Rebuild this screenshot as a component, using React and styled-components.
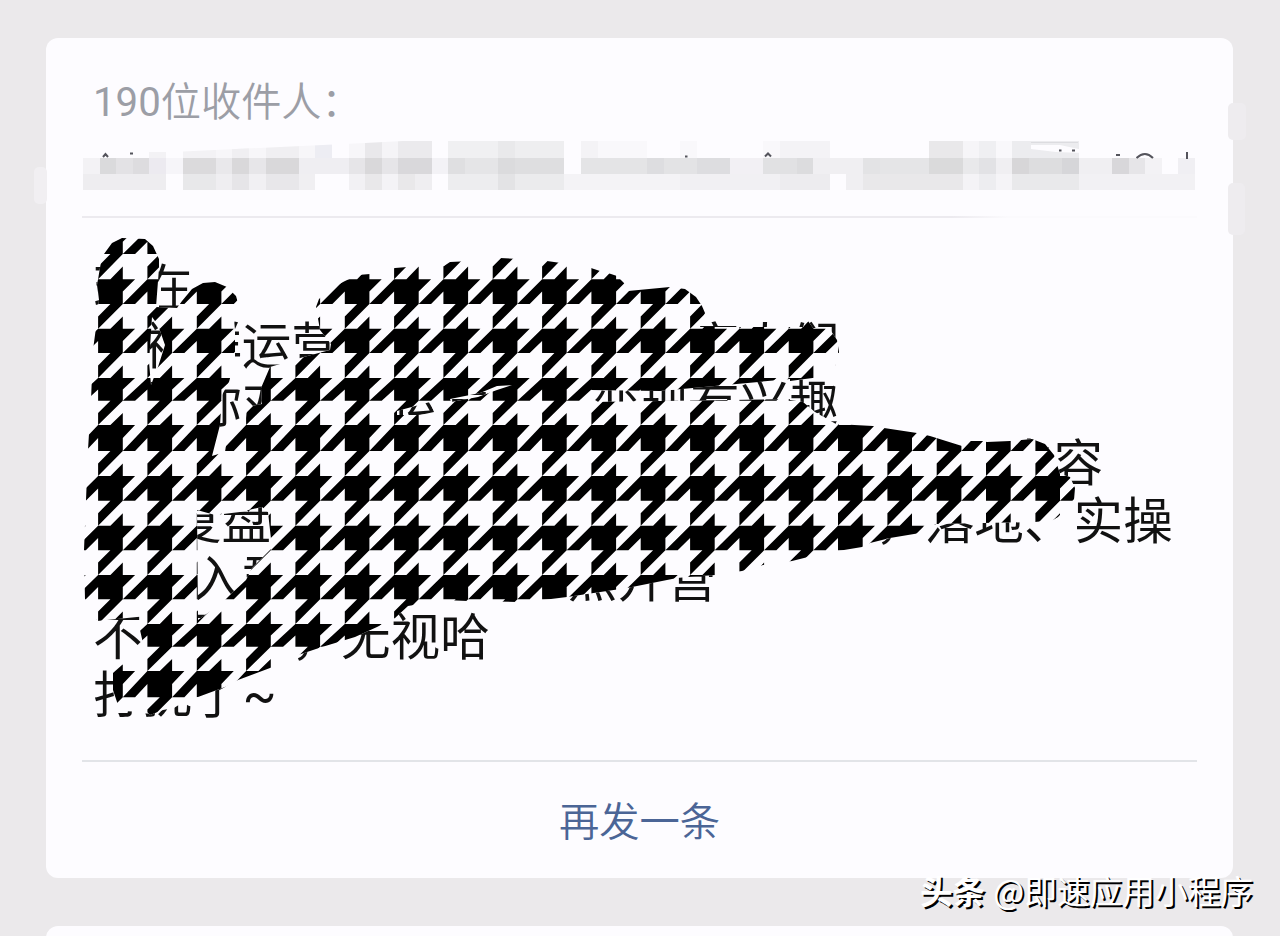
import React from 'react'
import styled, { createGlobalStyle } from 'styled-components'

const PAGE_COLOR = '#ebe9eb'
const CARD_COLOR = '#fdfcff'
const INK_COLOR = '#000'
const FONT = "Roboto, 'Noto Sans CJK SC', sans-serif"

const GlobalStyle = createGlobalStyle`
  body {
    margin: 0;
    background: ${PAGE_COLOR};
    font-family: ${FONT};
  }
`

const Page = styled.div`
  position: relative;
  box-sizing: border-box;
  width: 1280px;
  height: 936px;
  padding: 38px 47px 0 46px;
  overflow: hidden;
  display: flex;
  flex-direction: column;
  gap: 48px;
`

const Card = styled.div`
  position: relative;
  box-sizing: border-box;
  flex: none;
  height: 840px;
  padding: 0 36px;
  border-radius: 12px;
  background: ${CARD_COLOR};
  display: flex;
  flex-direction: column;
`

const Smudge = styled.div`
  position: absolute;
  left: ${p => p.$left}px;
  top: ${p => p.$top}px;
  width: ${p => p.$width}px;
  height: ${p => p.$height}px;
  border-radius: 5px;
  background: ${p => p.$color};
`

const Recipients = styled.div`
  position: relative;
  box-sizing: border-box;
  height: 178px;
  padding-top: 36px;
`

const Count = styled.div`
  height: 58px;
  padding-left: 11px;
  line-height: 58px;
  font-size: 40.2px;
  font-weight: 350;
  color: #9c9ea6;
`

const Digits = styled.span`
  font-weight: 400;
`

const Mosaic = styled.div`
  display: grid;
  width: 1112px;
  margin: 9px 0 0 1px;
  grid-template-columns: repeat(67, 1fr);
  grid-template-rows: 17px 16px 16px;
  clip-path: polygon(0 16px, 66px 11px, 90px 11px, 282px 2px, 320px 0, 100% 0, 100% 100%, 0 100%);
`

const MosaicCell = styled.span`
  grid-row: ${p => p.$row};
  grid-column: ${p => p.$from + 1} / ${p => p.$to + 1};
  background: ${p => p.$color};
`

const Leftovers = styled.svg`
  position: absolute;
  left: 0;
  top: 100px;
  width: 1116px;
  height: 30px;
`

const Divider = styled.div`
  flex: none;
  height: 2px;
  background: ${p => p.$fade
    ? 'linear-gradient(to right, #eceaef 78%, #fbfafd 83%)'
    : '#e2e4e8'};
`

const Message = styled.div`
  position: relative;
  box-sizing: border-box;
  height: 542px;
  padding: 42px 0 0 11px;
`

const Line = styled.div`
  display: flex;
  height: 58.2px;
  line-height: 58.2px;
  font-size: 49.6px;
  white-space: nowrap;
  color: #111;
`

const Part = styled.span`
  margin-left: ${p => p.$gap || 0}px;
`

const Doodle = styled.svg`
  position: absolute;
  left: 0;
  top: 0;
  width: 1116px;
  height: 542px;
`

const SendAgain = styled.button`
  flex: 1;
  padding: 0 0 3px;
  border: 0;
  background: none;
  font-family: 'Noto Sans CJK SC', sans-serif;
  font-size: 40.3px;
  font-weight: 350;
  color: #4b6596;
`

const Watermark = styled.div`
  position: absolute;
  right: 27px;
  bottom: 23px;
  display: flex;
  align-items: center;
  gap: 8px;
  height: 48px;
  font-family: 'Noto Sans CJK SC', sans-serif;
  font-size: 32.7px;
  color: #fff;
  text-shadow: 2px 2px 0 #000;
  white-space: nowrap;
`

const Brand = styled.span`
  font-weight: 700;
`

// [from column, to column, color] for each row of the mosaic
const MOSAIC = [
  [
    [4, 5, '#f3f2f5'], [6, 8, '#f3f2f5'], [8, 11, '#f7f6f9'], [9, 10, '#f0eff2'], [11, 13, '#f0eff2'],
    [13, 14, '#f7f6f9'], [14, 15, '#ededf3'], [16, 17, '#f7f6f9'], [17, 18, '#e9e8eb'], [18, 19, '#f5f4f7'],
    [19, 21, '#ebeaed'], [22, 25, '#f0f0f2'], [25, 26, '#e9e9eb'], [26, 29, '#eeeef0'], [30, 31, '#f4f3f6'],
    [31, 34, '#f9f8fb'], [36, 37, '#f9f8fb'], [41, 42, '#f9f8fb'], [42, 45, '#f4f3f6'], [51, 53, '#e9e8ea'],
    [53, 54, '#f6f5f8'], [54, 55, '#efeff2'], [55, 56, '#f9f8fb'], [56, 60, '#ececef'],
  ],
  [
    [0, 1, '#f3f2f5'], [1, 2, '#dadadc'], [2, 3, '#e3e2e5'], [3, 4, '#dddcdf'], [4, 5, '#eceaf0'],
    [5, 6, '#f6f5f9'], [6, 8, '#dbdadc'], [8, 9, '#e9e8eb'], [9, 10, '#d9d8da'], [10, 11, '#e7e6e9'],
    [11, 13, '#d9d8da'], [13, 16, '#efeef2'], [16, 17, '#e6e5e8'], [17, 18, '#d9d8da'], [18, 19, '#e6e5e8'],
    [19, 21, '#d9d8db'], [21, 22, '#f3f2f6'], [22, 23, '#dfdfe1'], [23, 25, '#e5e5e7'], [25, 26, '#dbdbdd'],
    [26, 29, '#dedee0'], [30, 34, '#e4e4e6'], [34, 35, '#dddde0'], [35, 37, '#e3e3e5'], [37, 39, '#dddde0'],
    [39, 41, '#f2f0f4'], [41, 43, '#e1e1e3'], [43, 44, '#dcdcde'], [44, 47, '#f0eff2'], [47, 48, '#e3e3e5'],
    [48, 51, '#e5e5e7'], [51, 53, '#dadadb'], [53, 54, '#e9e9eb'], [54, 55, '#e2e2e5'], [55, 56, '#f0eff2'],
    [56, 57, '#d7d6d8'], [57, 59, '#dddddf'], [59, 60, '#d6d6d9'], [60, 62, '#f0eff2'], [62, 63, '#d8d7da'],
    [63, 64, '#e6e5e8'], [64, 65, '#f3f2f5'], [66, 67, '#f0eff3'],
  ],
  [
    [0, 5, '#eeedf0'], [6, 8, '#e8e8ea'], [8, 9, '#efeef1'], [9, 10, '#e6e5e8'], [10, 11, '#f1f0f3'],
    [11, 13, '#e8e7ea'], [13, 14, '#f0eff2'], [16, 17, '#f2f1f4'], [17, 18, '#e9e8ea'], [18, 19, '#f4f3f6'],
    [19, 20, '#e9e8ea'], [20, 21, '#efeef1'], [22, 25, '#ededef'], [25, 26, '#e3e3e5'], [26, 29, '#ebebed'],
    [29, 36, '#f4f3f6'], [36, 42, '#f1f0f3'], [42, 45, '#edecef'], [46, 47, '#f0eff2'], [47, 53, '#e9e8ea'],
    [53, 54, '#f4f3f6'], [54, 55, '#ededf0'], [55, 56, '#f5f4f7'], [56, 60, '#e9e9eb'], [60, 67, '#f2f1f4'],
  ],
]

// each line is a list of [text, gap before it]
const LINES = [
  [['现在', 0]],
  [['做社群运营', 0], ['的家人们', 300]],
  [['如果你对社群运营', 0], ['变现有兴趣', 101]],
  [['内容', 911]],
  [['复盘', 79], ['，落地、实操', 604]],
  [['加入群', 50], ['点开营', 276]],
  [['不需要的，无视哈', 0]],
  [['打扰了', 0], ['~', 1]],
]

const TILE = 49.33
const TOOTH = [
  [2, -1], [2, 0], [3, 0], [2, 1], [2, 2], [0, 4], [0, 3], [1, 2],
  [0, 2], [0, 1], [-1, 2], [-2, 2], [0, 0], [1, 0],
]

// top and bottom of every row of squares, the rows are not quite even
const EDGES = [
  229.7, 254, 279.3, 304, 328.7, 353, 378, 400.7, 425, 451, 476,
  500.7, 525.7, 550.3, 575, 599.3, 624, 646.7, 671, 697.3, 722, 746,
]

const toothY = (row, y) => {
  const at = row * 2 + y / 2
  const i = Math.max(0, Math.min(EDGES.length - 2, Math.floor(at)))
  return EDGES[i] + (EDGES[i + 1] - EDGES[i]) * (at - i)
}

const toothPath = () => {
  let d = ''
  for (let row = 0; row < 10; row++) {
    for (let col = -1; col < 21; col++) {
      const points = TOOTH.map(([x, y]) => (
        `${(98.1 + col * TILE + x * TILE / 4).toFixed(1)} ${toothY(row, y).toFixed(1)}`
      ))
      d += `M${points.join('L')}Z`
    }
  }
  return d
}

const OUTLINE = `
  M104 254 L112 243 L122 238 L145 239 L153 246 L159 259 L159 268 L156 307 L177 308 L182 301
  L192 289 L203 283 L215 282 L227 287 L236 296 L238 303 L233 308 L235 330 L235 360
  L229 382 L222 395 L220 425 L212 456 L225 452 L228 432 L246 418 L247 407 L262 404
  L261 388 L270 367 L300 358 L330 350 L331 344 L320 330 L316 307 L319 299 L330 289
  L345 281 L358 275 L370 274 L395 268 L420 266 L444 266 L450 262 L493 260 L500 258
  L520 259 L547 261 L575 265 L591 268 L600 271 L608 273 L617 276 L624 283 L628 291
  L670 287 L685 289 L696 297 L702 306 L705 313 L700 327 L803 327 L808 321 L813 328
  L829 328 L837 340 L839 352 L834 372 L820 377 L790 381 L790 400 L803 402 L815 412
  L836 424 L873 426 L884 428 L917 433 L930 436 L962 446 L968 441 L982 441 L987 442
  L1010 441 L1032 439 L1045 444 L1054 455 L1060 474 L1070 477 L1075 488 L1074 500
  L1058 517 L1053 520 L1035 522 L937 524 L924 526 L920 533 L890 538 L870 543 L862 547
  L838 551 L808 557 L792 561 L763 565 L742 571 L715 575 L688 577 L677 578 L627 588
  L567 597 L543 600 L517 602 L468 601 L443 600 L408 606 L395 618 L377 627 L355 637
  L322 647 L298 655 L270 668 L238 680 L225 687 L198 697 L188 699 L174 708 L163 710
  L150 715 L147 712 L120 711 L117 702 L113 690 L113 673 L122 665 L145 652 L140 630
  L147 616 L97 621
  L85 600 L84 550 L86 500 L88 450 L91 400 L93 350 L97 320 L99 300 L97 285 L101 262 Z
`

// places where the message shows through the doodle
const GAPS = `
  M197 510 L215 515 L240 512 L262 507 L268 512 L272 548 L252 568 L246 580 L230 595 L222 603 L198 620 Z
  M152 317 L158 325 L165 345 L158 367 L151 385 L149 362 Z
  M591 390 L660 391 L790 379 L790 399 L591 402 Z
  M397 411 L430 402 L434 412 L420 415 L397 415 Z
  M450 399 L480 393 L497 386 L512 385 L497 390 L478 397 L451 402 Z
`

const TEETH = toothPath()

function RecipientMosaic () {
  return (
    <Mosaic>
      {MOSAIC.map((cells, row) => cells.map(([from, to, color]) => (
        <MosaicCell
          key={`${row}-${from}`}
          $row={row + 1}
          $from={from}
          $to={to}
          $color={color}
        />
      )))}
    </Mosaic>
  )
}

function NameLeftovers () {
  return (
    <Leftovers viewBox='82 138 1116 30' fill='none' stroke='#54545c' strokeWidth='2'>
      <path d='M1031 145H1060L1083 150V153L1056 152L1031 149Z' fill={CARD_COLOR} stroke='none' />
      <path d='M1031 142.5H1078' stroke='#dcdce0' strokeWidth='1' />
      <path d='M103 157L105.500 154L108 157M130 153.500H133M685 156.500H687.500M765 156.500L768 153.500L771 156.500' />
      <path d='M1059 150.500H1061.500M1072 150.500H1075M1116 155H1120' />
      <path d='M1136.500 158Q1145 150 1153 158M1187 152V159' />
    </Leftovers>
  )
}

function HoundstoothDoodle () {
  return (
    <Doodle viewBox='82 218 1116 542'>
      <clipPath id='doodle'>
        <path d={OUTLINE + GAPS} clipRule='evenodd' />
      </clipPath>
      <path d={OUTLINE + GAPS} fill={CARD_COLOR} fillRule='evenodd' />
      <path d={TEETH} fill={INK_COLOR} clipPath='url(#doodle)' />
    </Doodle>
  )
}

function App () {
  return (
    <Page>
      <GlobalStyle />
      <Card>
        <Smudge $left={-12} $top={129} $width={13} $height={37} $color='#f1eff2' />
        <Smudge $left={1182} $top={65} $width={18} $height={37} $color='#eeecef' />
        <Smudge $left={1182} $top={145} $width={17} $height={52} $color='#eeecef' />
        <Recipients>
          <Count><Digits>190</Digits>位收件人：</Count>
          <RecipientMosaic />
          <NameLeftovers />
        </Recipients>
        <Divider $fade />
        <Message>
          {LINES.map((parts, i) => (
            <Line key={i}>
              {parts.map(([text, gap]) => (
                <Part key={text} $gap={gap}>{text}</Part>
              ))}
            </Line>
          ))}
          <HoundstoothDoodle />
        </Message>
        <Divider />
        <SendAgain>再发一条</SendAgain>
      </Card>
      <Card />
      <Watermark>
        <Brand>头条</Brand>
        <span>@即速应用小程序</span>
      </Watermark>
    </Page>
  )
}

export default App
